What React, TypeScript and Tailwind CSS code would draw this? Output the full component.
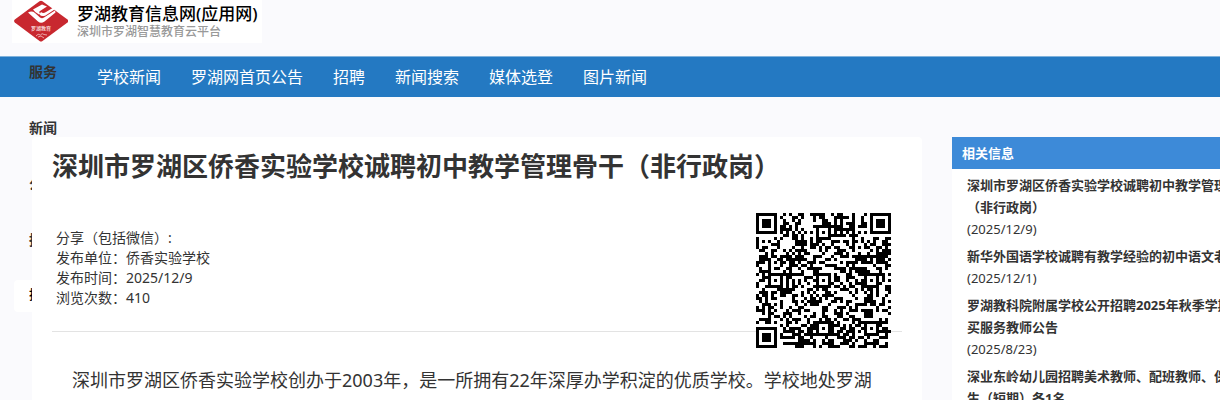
import React from 'react';

const NAV_LINKS = ['学校新闻', '罗湖网首页公告', '招聘', '新闻搜索', '媒体选登', '图片新闻'];

const SIDE_LINKS = ['服务', '新闻', '公告', '招聘'];

const META = [
  '分享（包括微信）:',
  '发布单位：侨香实验学校',
  '发布时间：2025/12/9',
  '浏览次数：410',
];

const RELATED = [
  { title: '深圳市罗湖区侨香实验学校诚聘初中教学管理骨干（非行政岗）', date: '2025/12/9' },
  { title: '新华外国语学校诚聘有教学经验的初中语文老师', date: '2025/12/1' },
  { title: '罗湖教科院附属学校公开招聘2025年秋季学期购买服务教师公告', date: '2025/8/23' },
  { title: '深业东岭幼儿园招聘美术教师、配班教师、保健医生（短期）各1名', date: '2025/8/20' },
];

const QR_SIZE = 45;
const QR_VERSION_BITS = '001010010011111000';

// distance in square rings from a mark's centre
const ring = (x: number, y: number, cx: number, cy: number) =>
  Math.max(Math.abs(x - cx), Math.abs(y - cy));

const isDark = (x: number, y: number): boolean => {
  for (const [cx, cy] of [[3, 3], [41, 3], [3, 41]]) {
    const d = ring(x, y, cx, cy);
    if (d <= 4) return d !== 2 && d !== 4;
  }
  for (const [cx, cy] of [[22, 6], [6, 22], [22, 22], [38, 22], [22, 38], [38, 38]]) {
    const d = ring(x, y, cx, cy);
    if (d <= 2) return d !== 1;
  }
  if (x === 6 || y === 6) return (x + y) % 2 === 0;
  if (y < 6 && x >= 34 && x <= 36) return QR_VERSION_BITS[y * 3 + x - 34] === '1';
  if (x < 6 && y >= 34 && y <= 36) return QR_VERSION_BITS[x * 3 + y - 34] === '1';
  let h = Math.imul(x + 11, 374761393) ^ Math.imul(y + 7, 668265263);
  h = Math.imul(h ^ (h >>> 13), 1274126177);
  return ((h ^ (h >>> 16)) & 1) === 1;
};

const QrCode: React.FC<{ className?: string }> = ({ className }) => {
  let d = '';
  for (let y = 0; y < QR_SIZE; y++) {
    for (let x = 0; x < QR_SIZE; x++) {
      if (isDark(x, y)) d += `M${x} ${y}h1v1h-1z`;
    }
  }
  return (
    <svg viewBox="0 0 45 45" shapeRendering="crispEdges" role="img" aria-label="二维码" className={className}>
      <rect width="45" height="45" fill="#fff" />
      <path d={d} fill="#000" />
    </svg>
  );
};

const Logo: React.FC = () => (
  <svg viewBox="0 0 56 42" className="w-14 h-[42px] shrink-0" aria-hidden="true">
    <path
      d="M27.5 1.2Q29 0.4 30.5 1.2L55.5 19.6Q57 21 55.5 22.4L30.5 41Q29 42 27.5 41L2.8 22.4Q1.4 21 2.8 19.6Z"
      fill="#c8282f"
    />
    <path d="M16 12.5Q20 10.5 23 13L28 17.5Q30 18.8 32 17.5L43 10.5L43.5 12.5L32.5 21.5Q29 24 26 21.5Z" fill="#fff" />
    <path d="M21 9.5L30 4.5L35 6.5L28 11Q26 12.5 28.5 13L27 14.5Q22.500 12 21 9.500Z" fill="#fff" />
    <path d="M29 12Q31 14 34 12L41.500 7.500L42.500 9.500L33.500 15.500Q29.500 17 27.500 14.500Z" fill="#fff" />
    <text x="29" y="30" textAnchor="middle" fontSize="5" fontWeight="500" fill="#fbe6e6">
      罗湖教育
    </text>
    <path d="M24 36Q26 33 28.500 35Q30 32.500 32 34.500L35 35M26 37L29 36L32 38" fill="none" stroke="#f3c3c4" strokeWidth="0.8" />
  </svg>
);

const SideMenu: React.FC = () => (
  <div className="absolute left-3.5 top-14 w-40 flex flex-col gap-6 text-sm font-bold">
    {SIDE_LINKS.map((label) => (
      <a key={label} href="#" className="h-8 px-[15px] leading-8">
        {label}
      </a>
    ))}
    <input
      type="text"
      aria-label="搜索"
      placeholder="搜索"
      className="h-8 w-full rounded bg-white px-[15px] pb-1 text-[13px] font-medium placeholder:text-black"
    />
  </div>
);

const App: React.FC = () => {
  return (
    <div className="relative min-h-screen overflow-hidden bg-[#fafafd] text-[#333] font-['Noto_Sans','Noto_Sans_CJK_SC',sans-serif]">
      <header className="h-14 pl-3">
        <div className="flex w-[250px] h-[43px] bg-white">
          <Logo />
          <div className="pl-[9px] pt-1 whitespace-nowrap">
            <div className="text-[17px] leading-5 font-medium text-black">罗湖教育信息网(应用网)</div>
            <div className="text-xs leading-4 font-medium text-[#999]">深圳市罗湖智慧教育云平台</div>
          </div>
        </div>
      </header>

      <nav className="flex gap-[30px] h-[41px] pl-[97px] border-t border-[#7fb2dc] bg-[#2479c2] text-base leading-10 text-white whitespace-nowrap">
        {NAV_LINKS.map((label) => (
          <a key={label} href="#">{label}</a>
        ))}
      </nav>

      <SideMenu />

      <div className="flex gap-[30px] min-w-[1272px] pt-10 pl-8">
        {/* Article */}
        <main className="relative z-10 flex-1 px-5 pt-3 rounded bg-white">
          <h1 className="text-[26px] leading-[34px] font-bold">
            深圳市罗湖区侨香实验学校诚聘初中教学管理骨干（非行政岗）
          </h1>
          <ul className="mt-[45px] pl-1 text-sm leading-5">
            {META.map((line) => (
              <li key={line}>{line}</li>
            ))}
          </ul>
          <QrCode className="absolute right-[31px] top-[76px] size-[135px]" />
          <hr className="mt-[23px] border-[#e3e3e3]" />
          <p className="mt-[30px] px-5 text-lg leading-9">
            深圳市罗湖区侨香实验学校创办于2003年，是一所拥有22年深厚办学积淀的优质学校。学校地处罗湖
          </p>
        </main>

        {/* Related posts */}
        <aside className="w-80 shrink-0 bg-white">
          <h2 className="h-8 px-2.5 bg-[#3d8ad8] text-[13px] leading-8 font-bold text-white">相关信息</h2>
          <ul className="flex flex-col gap-[5px] pt-[5px] pl-[15px] pr-4 text-[13px] leading-[22px]">
            {RELATED.map((item) => (
              <li key={item.title}>
                <a href="#" className="block font-bold">{item.title}</a>
                <span className="block">({item.date})</span>
              </li>
            ))}
          </ul>
        </aside>
      </div>
    </div>
  );
};

export default App;
